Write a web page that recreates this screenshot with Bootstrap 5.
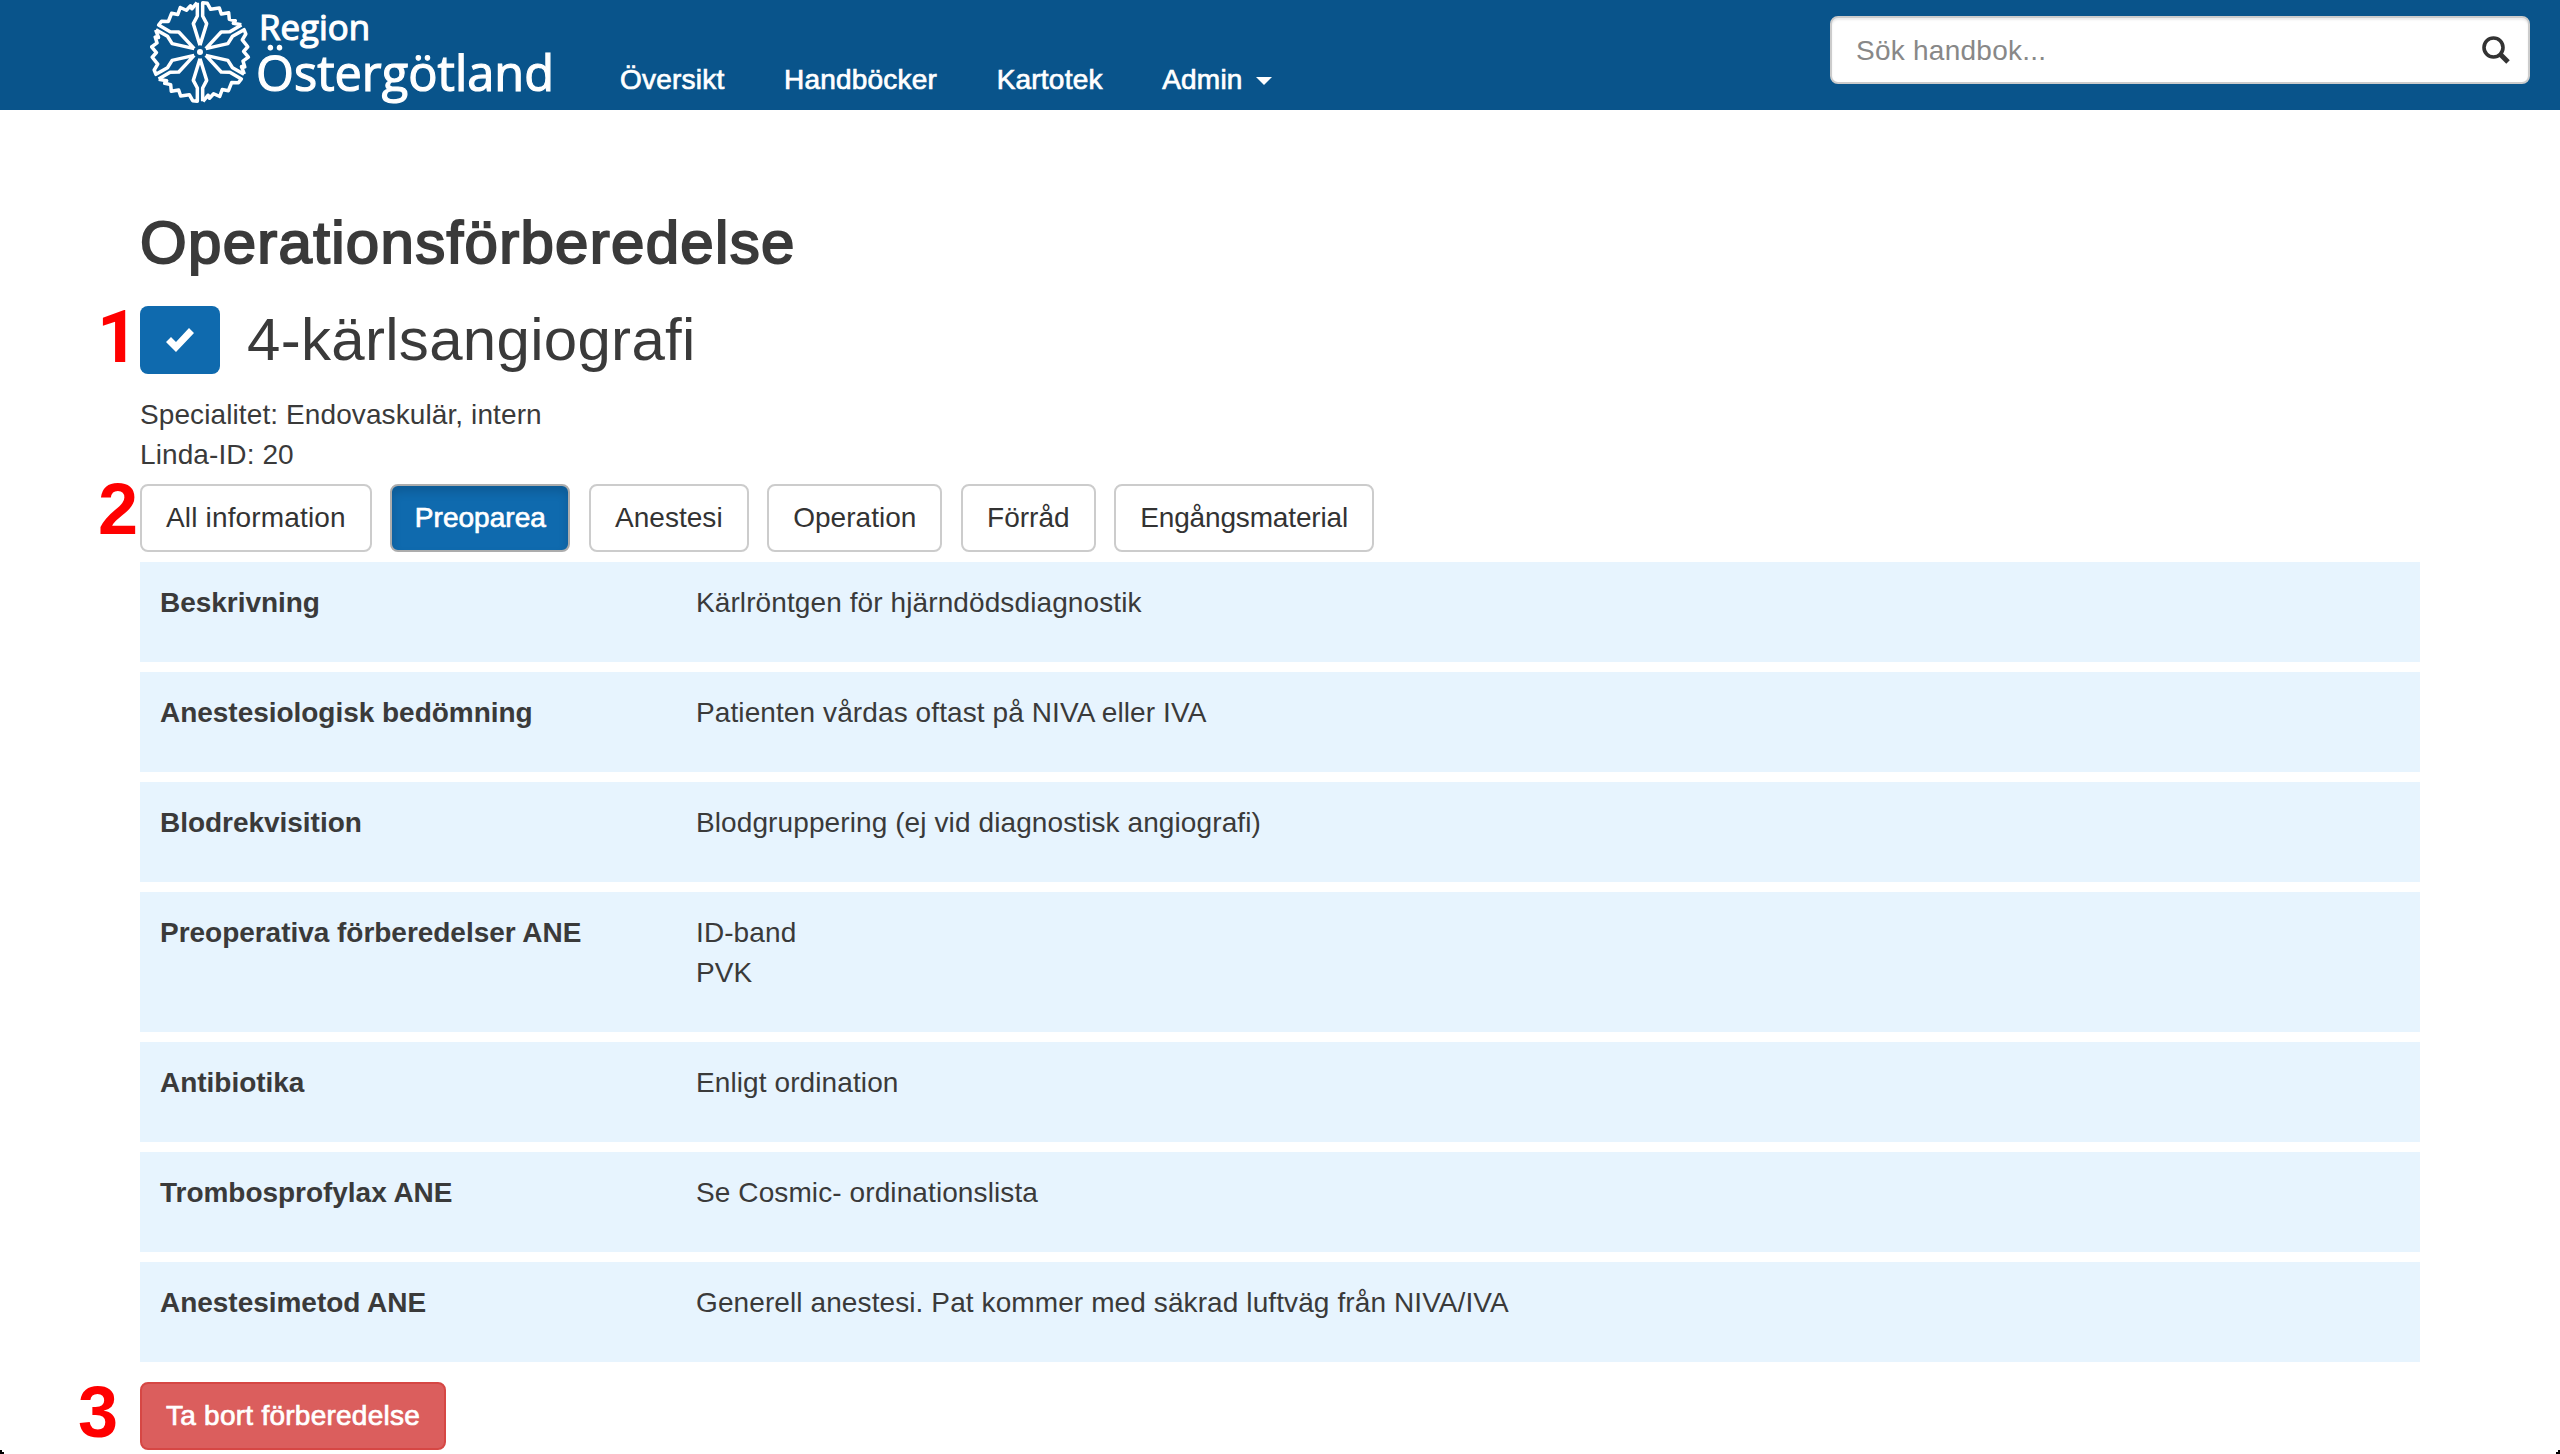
<!DOCTYPE html>
<html lang="sv">
<head>
<meta charset="utf-8">
<title>Operationsförberedelse</title>
<link rel="stylesheet" href="https://cdn.jsdelivr.net/npm/bootstrap@5.3.0/dist/css/bootstrap.min.css">
<style>
body{font:28px/40px "Liberation Sans",Arial,sans-serif;letter-spacing:.1px;color:#3a3a3a;background:#fff;height:1454px;overflow:hidden}
.topbar{height:110px;background:#09548b;padding:0 30px 0 150px}
.brand-logo{width:416px;height:110px;display:block}
.menu-links{gap:59.500px;padding:60px 0 0 54px;letter-spacing:.22px}
.menu-links .nav-link{color:#fff;padding:0;line-height:40px;-webkit-text-stroke:.7px #fff}
.menu-links .dropdown-toggle::after{border-width:8px 8px 0;margin-left:13px;vertical-align:4px}
.search-box{width:700px;height:68px;margin-top:16px;padding:0 18px 0 24px;background:#fff;border:2px solid #ccc;border-radius:8px;box-shadow:inset 0 2px 2px rgba(0,0,0,.08)}
.search-box .form-control{font-size:28px;border:0;padding:1px 0 0;box-shadow:none;background:none;letter-spacing:.25px}
.search-box .form-control::placeholder{color:#888;opacity:1}
.page-body{width:2280px;margin:0 auto;padding-top:100px}
.page-title{font-size:60px;line-height:66px;font-weight:400;letter-spacing:1.3px;-webkit-text-stroke:2px #3a3a3a;margin:0}
.proc-row{margin:30px 0 21px;gap:27px}
.proc-title{font-size:60px;line-height:68px;font-weight:400;letter-spacing:.3px;margin:0}
.check-btn{width:80px;height:68px;background:#0f6aae;border:0;border-radius:8px}
.tabs-bar{gap:18.500px;margin:9px 0 10px}
.tab-btn{height:68px;font-size:28px;line-height:40px;padding:12px 24px;border:2px solid #ccc;border-radius:8px;color:#333;background:#fff;letter-spacing:.04px}
.tab-btn:first-child{letter-spacing:.16px}
.tab-btn:last-child{letter-spacing:-.15px}
.tab-btn.active{padding-left:22.500px;padding-right:22.500px;background:#0f6aae!important;color:#fff!important;border-color:#adadad!important;box-shadow:inset 0 6px 10px rgba(0,0,0,.14);-webkit-text-stroke:.7px #fff}
.info-list{gap:10px;margin-bottom:20px}
.info-row{background:#e7f4fe;padding:21px 20px 39px}
.info-row dt{width:536px;letter-spacing:-.03px}
.remove-btn{height:68px;font-size:28px;line-height:40px;padding:12px 24px;letter-spacing:.25px;border:2px solid #d64744;border-radius:8px;background:#db5e5d;color:#fff;-webkit-text-stroke:.7px #fff}
.step-mark{position:absolute;font-weight:700;font-size:72px;line-height:72px;letter-spacing:0;color:#f00}
.step-1{left:97px;top:302px;font-family:Roboto,sans-serif}.step-2{left:98px;top:473px}.step-3{left:78px;top:1376px}
.win-corner{position:absolute;bottom:0;width:4px;height:4px;background:#000;clip-path:polygon(50% 0,100% 0,100% 100%,0 100%,0 50%,50% 50%)}
.corner-left{left:0;transform:scaleX(-1)}.corner-right{right:0}
</style>
</head>
<body class="position-relative">
<nav class="topbar d-flex align-items-start">
<a href="#" class="flex-shrink-0"><svg class="brand-logo" viewBox="150 0 416 110">
<defs><g id="petal"><path d="M0-20L20-85L8-108V-148L22-146L32-128L58-132L64-114L86-118L88-98L106-94L100-86L124-82M0-20L-20-85L-8-108V-148"/></g></defs>
<g transform="translate(200 52) scale(.3333)" fill="none" stroke="#fff" stroke-width="10.500" stroke-linejoin="round">
<use href="#petal"/><use href="#petal" transform="rotate(60)"/><use href="#petal" transform="rotate(120)"/><use href="#petal" transform="rotate(180)"/><use href="#petal" transform="rotate(240)"/><use href="#petal" transform="rotate(300)"/>
<circle r="9" fill="#fff" stroke="none"/></g>
<g fill="#fff" font-family="'Open Sans','Noto Sans',sans-serif" stroke="#fff" stroke-width="1.200" letter-spacing="0">
<text x="259" y="39.500" font-size="34" textLength="111" lengthAdjust="spacingAndGlyphs">Region</text>
<text x="256" y="91" font-size="49" textLength="298" lengthAdjust="spacingAndGlyphs">Östergötland</text></g>
</svg></a>
<div class="navbar-nav flex-row menu-links">
<a class="nav-link" href="#">Översikt</a><a class="nav-link" href="#">Handböcker</a><a class="nav-link" href="#">Kartotek</a><a class="nav-link dropdown-toggle" href="#">Admin</a>
</div>
<form class="search-box d-flex align-items-center ms-auto">
<input class="form-control" placeholder="Sök handbok...">
<svg width="28" height="28" viewBox="0 0 28 28" fill="none" stroke="#333" class="flex-shrink-0"><circle cx="11.500" cy="11.500" r="9.500" stroke-width="3.600"/><path d="M18 18L26 26" stroke-width="5"/></svg>
</form>
</nav>
<main class="page-body">
<h1 class="page-title">Operationsförberedelse</h1>
<div class="d-flex align-items-center proc-row">
<button class="btn check-btn p-0 d-flex align-items-center justify-content-center"><svg width="30" height="25" viewBox="0 0 30 25"><path fill="#fff" d="M1 14L6 9L11 14L24 0L29 5L11 24Z"/></svg></button>
<h2 class="proc-title">4-kärlsangiografi</h2>
</div>
<div>Specialitet: Endovaskulär, intern</div>
<div>Linda-ID: 20</div>
<div class="d-flex tabs-bar">
<button class="btn tab-btn">All information</button><button class="btn tab-btn active">Preoparea</button><button class="btn tab-btn">Anestesi</button><button class="btn tab-btn">Operation</button><button class="btn tab-btn">Förråd</button><button class="btn tab-btn">Engångsmaterial</button>
</div>
<dl class="d-flex flex-column mt-0 info-list">
<div class="info-row d-flex"><dt>Beskrivning</dt><dd class="m-0">Kärlröntgen för hjärndödsdiagnostik</dd></div>
<div class="info-row d-flex"><dt>Anestesiologisk bedömning</dt><dd class="m-0">Patienten vårdas oftast på NIVA eller IVA</dd></div>
<div class="info-row d-flex"><dt>Blodrekvisition</dt><dd class="m-0">Blodgruppering (ej vid diagnostisk angiografi)</dd></div>
<div class="info-row d-flex"><dt>Preoperativa förberedelser ANE</dt><dd class="m-0">ID-band<br>PVK</dd></div>
<div class="info-row d-flex"><dt>Antibiotika</dt><dd class="m-0">Enligt ordination</dd></div>
<div class="info-row d-flex"><dt>Trombosprofylax ANE</dt><dd class="m-0">Se Cosmic- ordinationslista</dd></div>
<div class="info-row d-flex"><dt>Anestesimetod ANE</dt><dd class="m-0">Generell anestesi. Pat kommer med säkrad luftväg från NIVA/IVA</dd></div>
</dl>
<button class="btn remove-btn d-block">Ta bort förberedelse</button>
</main>
<span class="step-mark step-1">1</span><span class="step-mark step-2">2</span><span class="step-mark step-3">3</span>
<i class="win-corner corner-left"></i><i class="win-corner corner-right"></i>
<script src="https://cdn.jsdelivr.net/npm/bootstrap@5.3.0/dist/js/bootstrap.bundle.min.js"></script>
</body>
</html>
